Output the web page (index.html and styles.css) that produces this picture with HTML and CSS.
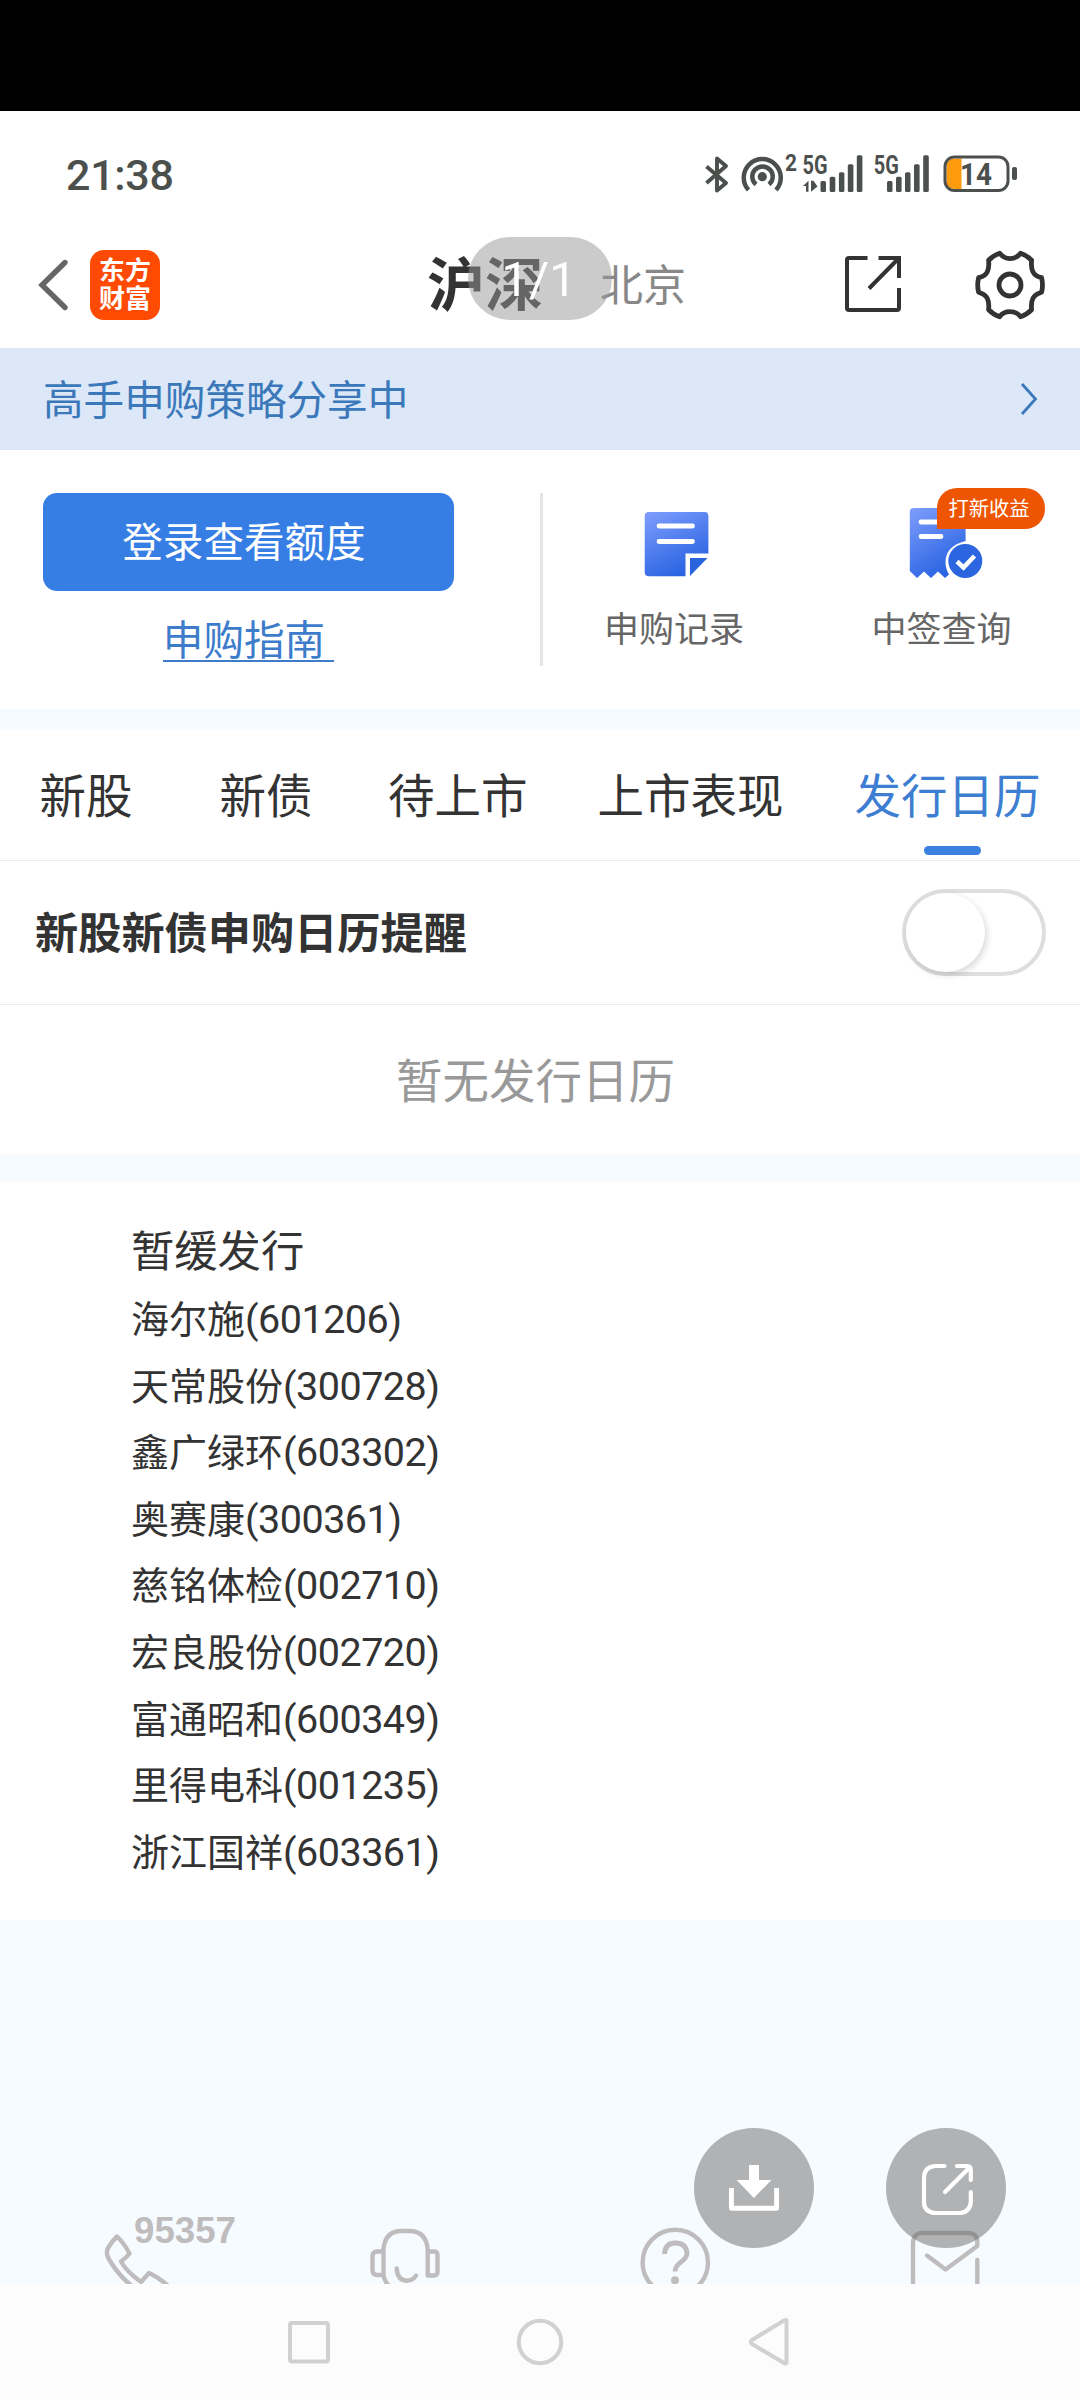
FILE: index.html
```html
<!DOCTYPE html>
<html lang="zh-CN">
<head>
<meta charset="utf-8">
<title>发行日历</title>
<link rel="stylesheet" href="styles.css">
</head>
<body>
<div class="screen">
  <div class="letterbox"></div>

  <div class="status">
    <span class="time">21:38</span>
    <svg class="status-icons" width="320" height="54" viewBox="700 147 320 54" fill="#4b504d">
      <path d="M706.500 166.500L726 183L717 190.500V158.500L726 166L706.500 183" fill="none" stroke="#4b504d" stroke-width="3.900" stroke-linejoin="round"/>
      <g fill="none" stroke="#4b504d" stroke-width="4.500">
        <path d="M748.500 190A18.500 18.500 0 1 1 776 190"/>
        <path d="M756 184.500A10.200 10.200 0 1 1 769 184.500"/>
      </g>
      <circle cx="762.300" cy="176.700" r="4.600"/>
      <text class="net" x="785" y="171" font-size="24" textLength="12" lengthAdjust="spacingAndGlyphs">2</text>
      <text class="net" x="802.500" y="174" font-size="25" textLength="25" lengthAdjust="spacingAndGlyphs">5G</text>
      <path d="M803 186L808.500 180.700V191.700H806V186ZM811 180.700H813.500L817.500 186.500L811 191.700Z"/>
      <rect x="820.500" y="181" width="5.500" height="11" rx="1.500"/><rect x="829.700" y="176.700" width="5.600" height="15.300" rx="1.500"/><rect x="838.900" y="172.300" width="5.500" height="19.700" rx="1.500"/><rect x="847.800" y="164.300" width="5.600" height="27.700" rx="1.500"/><rect x="856.800" y="155.300" width="5.600" height="36.700" rx="1.500"/>
      <text class="net" x="873.800" y="174" font-size="25" textLength="25" lengthAdjust="spacingAndGlyphs">5G</text>
      <rect x="887" y="181" width="5.500" height="11" rx="1.500"/><rect x="896" y="176.700" width="5.600" height="15.300" rx="1.500"/><rect x="905" y="172.300" width="5.500" height="19.700" rx="1.500"/><rect x="914" y="164.300" width="5.600" height="27.700" rx="1.500"/><rect x="923.200" y="155.300" width="5.600" height="36.700" rx="1.500"/>
      <path d="M961.500 158.500V189H955Q946.500 189 946.500 181V167Q946.500 158.500 955 158.500Z" fill="#fe9b0c"/>
      <rect x="945" y="157" width="63" height="33.500" rx="9.500" fill="none" stroke="#4b504d" stroke-width="3"/>
      <rect x="1012" y="167" width="5" height="13" rx="2"/>
      <text class="net" x="960" y="185.300" font-size="32" textLength="32" lengthAdjust="spacingAndGlyphs">14</text>
    </svg>
  </div>

  <header class="header">
    <svg class="back" width="32" height="56" viewBox="38 257 32 56"><path d="M65 262.500L42 285L65 307.500" fill="none" stroke="#666" stroke-width="5.400" stroke-linecap="round"/></svg>
    <div class="logo"><span>东方</span><span>财富</span></div>
    <div class="markets"><b>沪深</b><span>北京</span></div>
    <svg class="share" width="58" height="58" viewBox="844 255 58 58" fill="none" stroke="#333" stroke-width="4">
      <path d="M867.500 258H849Q847 258 847 260V308Q847 310 849 310H897Q899 310 899 308V288M878.500 258H899V278M869 288.500L899 258"/>
    </svg>
    <svg class="gear" width="76" height="76" viewBox="972.400 246.300 76 76" fill="none" stroke="#333" stroke-width="4.800" stroke-linejoin="round">
      <circle cx="1010.400" cy="284.300" r="11"/>
      <path d="M1000 252.500Q1004 258 1010.400 258T1021 252.500Q1027 254.500 1032 259.500C1031 270 1033.500 275 1042 277Q1043.800 284.300 1042 291.500C1033.500 294 1031 299 1032 309Q1027 314 1021 316Q1017 311 1010.400 311T1000 316Q994 314 989 309C990 299 987.500 294 979 291.500Q977.200 284.300 979 277C987.500 275 990 270 989 259.500Q994 254.500 1000 252.500Z"/>
    </svg>
    <div class="page-pill">1/1</div>
  </header>

  <div class="banner"><span>高手申购策略分享中</span>
    <svg width="20" height="36" viewBox="0 0 20 36"><path d="M3 3L16.500 18L3 33" fill="none" stroke="#3b78ba" stroke-width="2.800"/></svg>
  </div>

  <section class="account">
    <div class="login">
      <button class="login-btn">登录查看额度&nbsp;</button>
      <a class="guide">申购指南&nbsp;</a>
    </div>
    <div class="entries">
      <div class="entry">
        <svg width="80" height="80" viewBox="636 504 80 80">
          <defs><linearGradient id="blue" x1="0" y1="0" x2=".5" y2="1"><stop offset="0" stop-color="#7f9efd"/><stop offset="1" stop-color="#2a64e2"/></linearGradient></defs>
          <path d="M649 512H704.500Q708.400 512 708.400 516V553.500H685.500V576.300H649Q644.700 576.300 644.700 572V516Q644.700 512 649 512Z" fill="url(#blue)"/>
          <path d="M690 558H707.500L690 576Z" fill="#2a64dc"/>
          <path d="M659 526H692.500M659 541.500H692.500" stroke="#fff" stroke-width="4.800" stroke-linecap="round"/>
        </svg>
        <span>申购记录</span>
      </div>
      <div class="entry">
        <svg width="80" height="80" viewBox="902 504 80 80">
          <path d="M912.500 508H961Q964.600 508 964.600 512V541Q944 546 944.500 563Q945 570 948 574.500L944 578L937 571.500L930 578L923 571.500L916 578L908.800 571V512Q908.800 508 912.500 508Z" fill="url(#blue)"/>
          <path d="M920 522H942M920 536.500H940" stroke="#fff" stroke-width="4.800" stroke-linecap="round"/>
          <circle cx="964.300" cy="561" r="17" fill="#2b65df"/>
          <path d="M956 561.500L962.500 567.500L973.500 556" fill="none" stroke="#fff" stroke-width="4.500"/>
        </svg>
        <span>中签查询</span>
        <em class="tag">打新收益</em>
      </div>
    </div>
  </section>

  <nav class="tabs">
    <a>新股</a><a>新债</a><a>待上市</a><a>上市表现</a><a class="active">发行日历</a>
  </nav>

  <div class="remind"><b>新股新债申购日历提醒</b><div class="switch"><i></i></div></div>
  <div class="empty">暂无发行日历</div>

  <section class="paused">
    <h2>暂缓发行</h2>
    <ul>
      <li>海尔施<span>(601206)</span></li>
      <li>天常股份<span>(300728)</span></li>
      <li>鑫广绿环<span>(603302)</span></li>
      <li>奥赛康<span>(300361)</span></li>
      <li>慈铭体检<span>(002710)</span></li>
      <li>宏良股份<span>(002720)</span></li>
      <li>富通昭和<span>(600349)</span></li>
      <li>里得电科<span>(001235)</span></li>
      <li>浙江国祥<span>(603361)</span></li>
    </ul>
  </section>

  <footer class="contacts">
    <svg width="1080" height="84" viewBox="0 2200 1080 84" fill="none" stroke="#bfbcbe" stroke-width="4.400" stroke-linejoin="round" stroke-linecap="round">
      <text class="hotline" x="134" y="2242.500" font-size="37" textLength="102" lengthAdjust="spacingAndGlyphs">95357</text>
      <path d="M132 2286Q120 2277 110 2261Q105 2253 108 2248Q112 2241 117 2236.500Q124 2243 129.500 2253.500Q126 2258 121 2261.500Q127 2272 141 2282L149 2273Q158 2277 167 2285"/>
      <path d="M389 2286Q383.500 2280 383.500 2274V2249Q385 2232 400 2231H411Q426 2232 427.700 2249V2275.500H434Q437.500 2275.500 437.500 2272V2255Q437.500 2251.500 434 2251.500H428M383 2251.500H377Q372.500 2252 372.500 2256V2270Q372.500 2275 377 2275H383M396.700 2268.500Q397.500 2280.500 407 2280.700Q413 2280.500 416 2275.700"/>
      <circle cx="675.300" cy="2262.500" r="32.700"/>
      <path d="M664.500 2254Q665 2243 675.500 2243T687 2253C687 2262 675 2262 675 2271.500" stroke-width="4.800" stroke-linecap="butt"/>
      <circle cx="675" cy="2280.300" r="4" fill="#bfbcbe" stroke="none"/>
      <path d="M913 2290V2242Q914 2233.500 921 2233H970Q976 2234 977.300 2240V2246L945.600 2269.500L927 2255.500M977.300 2260V2290"/>
    </svg>
  </footer>

  <div class="sysnav">
    <svg width="46" height="50" viewBox="0 0 46 50"><rect x="4" y="6" width="38" height="38.500" rx="2"/></svg>
    <svg width="50" height="50" viewBox="0 0 50 50"><circle cx="25" cy="25" r="21.200"/></svg>
    <svg class="nav-back" width="46" height="50" viewBox="745 2317 46 50"><path d="M786.500 2320.500V2363Q785.500 2364 784 2363L752 2344Q749.500 2342 752 2340L784 2320.500Q785.500 2319.500 786.500 2320.500Z"/></svg>
  </div>

  <div class="fab fab-save">
    <svg width="120" height="120" viewBox="694 2128 120 120"><path d="M749 2165H759V2180H771.400L753.900 2198L736.600 2180H749Z" fill="#fff"/><path d="M731.400 2188V2208.300H776.600V2188" fill="none" stroke="#fff" stroke-width="4.900" stroke-linejoin="round"/></svg>
  </div>
  <div class="fab fab-open">
    <svg width="120" height="120" viewBox="886 2128 120 120" fill="none" stroke="#fff" stroke-width="4.200" stroke-linecap="round"><path d="M944.500 2166H935Q924 2167 924 2178V2202Q924 2212 935 2213H960Q970 2212 970.800 2202V2192M957 2166H967Q970.800 2166 970.800 2170V2180M945 2192L969.500 2167.500"/></svg>
  </div>
</div>
</body>
</html>
```
FILE: styles.css
```css
* { box-sizing: border-box; }
body {
  margin: 0;
  background: #f6fbff;
  color: #333;
  font-family: "Noto Sans CJK SC", sans-serif;
}
svg { display: block; flex: none; }
.screen {
  position: relative;
  display: flex;
  flex-direction: column;
  width: 1080px;
  height: 2400px;
  overflow: hidden;
}
.screen > * { flex: none; }
.letterbox { height: 111px; background: #000; }

.status {
  display: flex;
  align-items: center;
  justify-content: space-between;
  height: 126px;
  padding: 0 60px 0 66px;
  background: #fff;
}
.time { padding-top: 1px; font: 500 43px/50px Roboto, sans-serif; letter-spacing: -.3px; color: #4b504d; }
.net { font-family: Roboto, sans-serif; font-weight: 700; }

.header {
  position: relative;
  display: flex;
  align-items: center;
  height: 111px;
  padding: 0 32px 15px 38px;
  background: #fff;
}
.logo {
  display: flex;
  flex-direction: column;
  justify-content: center;
  width: 70px;
  height: 70px;
  margin: -1px 0 0 20px;
  padding-bottom: 3px;
  border-radius: 14px;
  background: #fe4a02;
  color: #fff;
  font-size: 26px;
  font-weight: 700;
  line-height: 28.500px;
  text-align: center;
}
.markets { display: flex; align-items: center; width: 418px; margin-left: 267px; }
.markets b { font-size: 58px; line-height: 80px; margin-top: -8px; }
.markets span { margin-left: 57px; font-size: 43px; line-height: 60px; color: #888; margin-top: -7px; }
.share { margin: -2px 0 0 -1px; }
.gear { margin: -1px 0 0 auto; }
.page-pill {
  position: absolute;
  left: 468px;
  top: 0;
  width: 144px;
  height: 83px;
  padding-right: 2px;
  border-radius: 42px;
  background: rgba(152, 152, 152, .5);
  color: #fff;
  font: 400 49px/86px Roboto, sans-serif;
  text-align: center;
}

.banner {
  display: flex;
  align-items: center;
  justify-content: space-between;
  height: 102px;
  padding: 0 41px 0 43px;
  background: #dce7f8;
  color: #3b78ba;
  font-size: 40.600px;
  line-height: 60px;
}
.banner span { margin-top: -2px; }

.account { display: flex; height: 259px; padding-top: 43px; background: #fff; }
.login { display: flex; flex-direction: column; align-items: center; width: 540px; padding: 0 86px 0 43px; }
.login-btn {
  width: 411px;
  height: 98px;
  padding: 0 0 4px;
  border: 0;
  border-radius: 14px;
  background: #367ee4;
  color: #fff;
  font: 40.600px/60px "Noto Sans CJK SC", sans-serif;
}
.guide {
  height: 53px;
  margin-top: 18px;
  border-bottom: 2px solid #3d7ccb;
  color: #3d7ccb;
  font-size: 40.600px;
  line-height: 57px;
}
.entries { display: flex; height: 173px; border-left: 3px solid #e5e5e5; }
.entry { position: relative; display: flex; flex-direction: column; align-items: center; width: 273px; padding-top: 11px; }
.entry:first-child { width: 262px; }
.entry svg { margin-left: 3px; }
.entry span { margin-top: 18px; font-size: 35px; line-height: 50px; color: #666; }
.tag {
  position: absolute;
  left: 132px;
  top: -5px;
  width: 108px;
  height: 41px;
  padding-right: 4px;
  border-radius: 20px 20px 20px 0;
  background: #ee5502;
  color: #fff;
  font-size: 20.300px;
  font-style: normal;
  line-height: 39px;
  text-align: center;
}

.tabs {
  display: flex;
  height: 131px;
  margin-top: 21px;
  padding-left: 39.500px;
  border-bottom: 1px solid #ebebeb;
  background: #fff;
  font-size: 46.500px;
  line-height: 126px;
}
.tabs a:nth-child(2) { margin-left: 87px; }
.tabs a:nth-child(3) { margin-left: 75.500px; }
.tabs a:nth-child(4) { margin-left: 70px; }
.tabs .active { position: relative; margin-left: 71px; color: #3d7ed2; }
.tabs .active::after {
  content: "";
  position: absolute;
  left: 69px;
  top: 116px;
  width: 57px;
  height: 9px;
  border-radius: 5px;
  background: #3a80e0;
}

.remind {
  display: flex;
  align-items: center;
  justify-content: space-between;
  height: 144px;
  padding: 0 34px 0 35px;
  border-bottom: 1px solid #ebebeb;
  background: #fff;
  font-size: 43.200px;
}
.remind b { margin-top: -5px; line-height: 60px; }
.switch { width: 144px; height: 87px; border: 4px solid #dedede; border-radius: 44px; }
.switch i { display: block; width: 79px; height: 79px; border-radius: 50%; background: #fff; box-shadow: 2px 3px 6px rgba(60, 40, 50, .18); }

.empty { height: 149px; padding-right: 9px; background: #fff; color: #999; font-size: 46.500px; line-height: 145px; text-align: center; }

.paused { height: 738px; margin-top: 28px; padding: 34px 0 0 131px; background: #fff; }
.paused h2 { margin: 0; font-size: 43.300px; font-weight: 400; line-height: 64px; }
.paused ul { margin: 4px 0 0; padding: 0; list-style: none; font-size: 38px; }
.paused li { height: 66.600px; line-height: 66px; }
.paused li span { font-family: Roboto, sans-serif; font-size: 39.500px; letter-spacing: -.5px; }

.contacts { height: 84px; margin-top: 280px; overflow: hidden; }
.hotline { font-family: "Liberation Sans", sans-serif; font-weight: 700; fill: #bfbcbe; stroke: none; }

.sysnav { display: flex; align-items: center; gap: 183px; height: 116px; padding: 0 0 0 286px; background: #fcfcfc; }
.sysnav svg { fill: none; stroke: #d1d1d1; stroke-width: 4; }
.sysnav .nav-back { margin-left: -3px; }

.fab { position: absolute; top: 2128px; width: 120px; height: 120px; border-radius: 50%; background: rgba(106, 106, 106, .5); }
.fab-save { left: 694px; }
.fab-open { left: 886px; }
```
